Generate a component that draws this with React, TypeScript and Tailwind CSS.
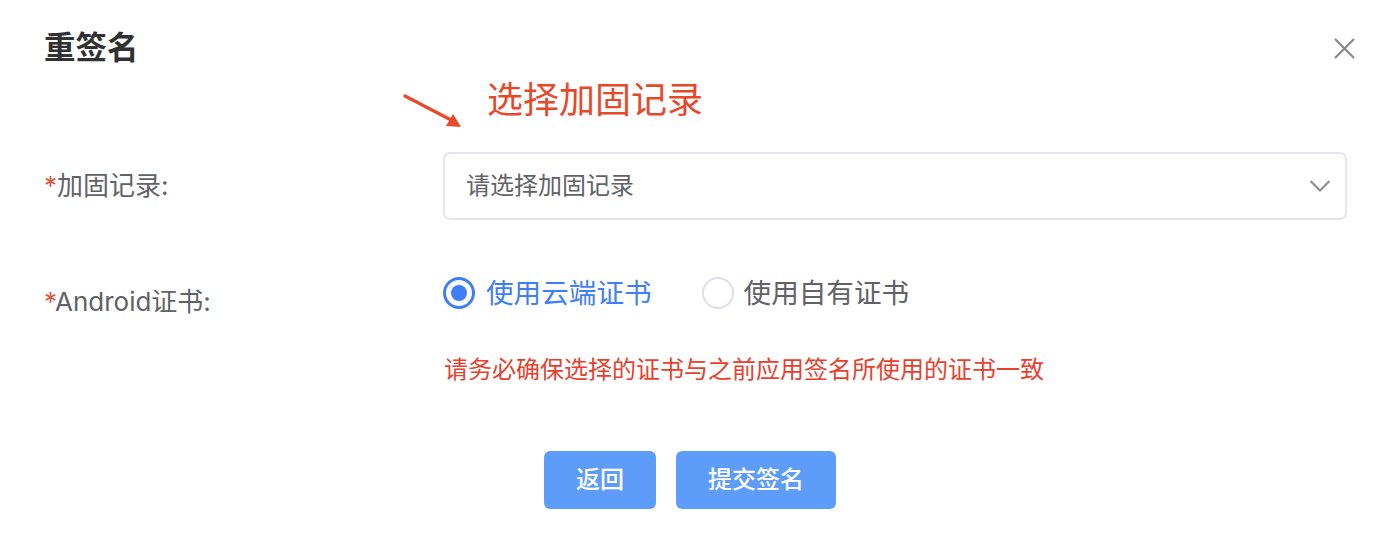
import React from "react";

export default function App() {
  return (
    <div className="w-[1376px] h-[546px] bg-white overflow-hidden font-['Inter','Noto_Sans_CJK_SC',sans-serif]">
      {/* Header */}
      <div className="h-[80px] flex items-start justify-between pl-[44px] pr-[21px] pt-[32px]">
        <div className="text-[31.5px] leading-[32px] font-bold text-[#303133]">重签名</div>
        <svg width="21" height="21" viewBox="0 0 21 21" className="mt-[6px]">
          <path d="M1 1 L20 20 M20 1 L1 20" stroke="#86888d" strokeWidth="2.2" fill="none" />
        </svg>
      </div>

      {/* Annotation */}
      <div className="h-[52px] flex items-start pl-[403px]">
        <svg width="60" height="38" viewBox="0 0 60 38" className="mt-[12px]">
          <path d="M2 4 L50 29" stroke="#e84a2b" strokeWidth="3.2" strokeLinecap="round" fill="none" />
          <path d="M58 35 L43 34 L50 22 Z" fill="#e84a2b" />
        </svg>
        <div className="ml-[24px] text-[36px] leading-[40px] text-[#e8482a]">选择加固记录</div>
      </div>

      {/* Row 1 */}
      <div className="mt-[20px] flex items-center h-[68px]">
        <div className="w-[443px] shrink-0 pl-[44px] text-[26px] leading-[32px] text-[#606266]">
          <span className="text-[#e05545]">*</span>加固记录:
        </div>
        <div className="w-[904px] h-[68px] border-2 border-[#e4e6eb] rounded-[7px] flex items-center justify-between pl-[21px] pr-[14px]">
          <span className="text-[24px] leading-[30px] text-[#606266]">请选择加固记录</span>
          <svg width="22" height="14" viewBox="0 0 22 14">
            <path d="M1.5 2 L11 11.5 L20.5 2" stroke="#8f9196" strokeWidth="2.2" fill="none" />
          </svg>
        </div>
      </div>

      {/* Row 2 */}
      <div className="mt-[57px] flex items-start">
        <div className="w-[443px] shrink-0 pl-[44px] mt-[9px] text-[26px] leading-[32px] text-[#606266]">
          <span className="text-[#e05545]">*</span>Android证书:
        </div>
        <div className="flex items-center h-[32px]">
          <div className="w-[32px] h-[32px] rounded-full border-[3px] border-[#3f7ef6] flex items-center justify-center">
            <div className="w-[16px] h-[16px] rounded-full bg-[#3f7ef6]" />
          </div>
          <span className="ml-[11px] text-[27.6px] leading-[32px] text-[#3f7ef6]">使用云端证书</span>
          <div className="ml-[50px] w-[32px] h-[32px] rounded-full border-2 border-[#dcdfe6]" />
          <span className="ml-[10px] text-[27.6px] leading-[32px] text-[#606266]">使用自有证书</span>
        </div>
      </div>

      {/* Warning */}
      <div className="mt-[36px] pl-[444px] text-[24px] leading-[32px] text-[#e8402e]">
        请务必确保选择的证书与之前应用签名所使用的证书一致
      </div>

      {/* Buttons */}
      <div className="mt-[65px] flex justify-center gap-[20px] pl-[4px]">
        <button className="w-[112px] h-[58px] rounded-[6px] bg-[#5d9cf8] text-white text-[24px] font-medium">返回</button>
        <button className="w-[160px] h-[58px] rounded-[6px] bg-[#5d9cf8] text-white text-[24px] font-medium">提交签名</button>
      </div>
    </div>
  );
}
